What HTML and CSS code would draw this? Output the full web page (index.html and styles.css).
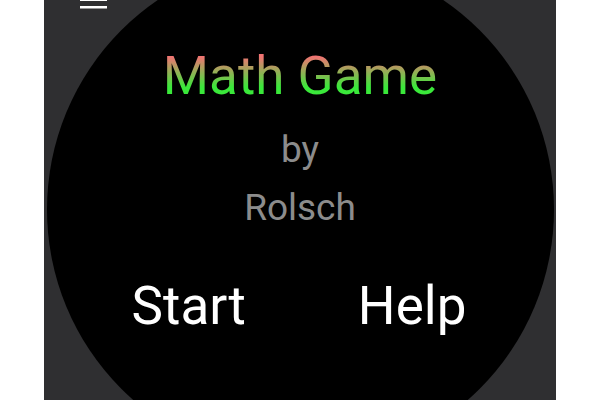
FILE: index.html
```html
<!DOCTYPE html>
<html lang="en">
<head>
    <meta charset="UTF-8">
    <meta name="viewport" content="width=device-width, initial-scale=1.0">
    <title>Math Game</title>
    <link rel="stylesheet" href="styles.css">
</head>
<body>
    <div class="watch">
        <!-- menu button, mostly off the top edge -->
        <svg class="menu-icon" width="27" height="20" viewBox="0 0 27 20">
            <rect x="0" y="1" width="27" height="2.5" fill="#fff"/>
            <rect x="0" y="8.5" width="27" height="2.5" fill="#fff"/>
            <rect x="0" y="16" width="27" height="2.5" fill="#fff"/>
        </svg>

        <div class="face">
            <h1 class="title">Math Game</h1>
            <p class="credit by">by</p>
            <p class="credit author">Rolsch</p>
            <div class="actions">
                <a href="#" class="action">Start</a>
                <a href="#" class="action">Help</a>
            </div>
        </div>
    </div>
</body>
</html>
```

FILE: styles.css
```css
html, body {
    margin: 0;
    padding: 0;
    height: 100%;
    overflow: hidden;
}

body {
    font-family: Roboto, "Liberation Sans", Arial, sans-serif;
    background: #ffffff;
}

.watch {
    position: relative;
    width: 512px;
    height: 400px;
    margin: 0 auto;
    background: #2f2f31;
    overflow: hidden;
}

.menu-icon {
    position: absolute;
    top: -10px;
    left: 36px;
    z-index: 2;
}

.face {
    width: 507px;
    height: 507px;
    margin: -44px auto 0;
    border-radius: 50%;
    background: #000;
    box-sizing: border-box;
    padding-top: 94px;
    display: flex;
    flex-direction: column;
    align-items: center;
}

/* red on top fading into green at the baseline */
.title {
    margin: 0;
    font-size: 53px;
    line-height: 53px;
    font-weight: 400;
    background: linear-gradient(to bottom, #f27373 0%, #f27373 12%, #3ae83a 70%, #3ae83a 100%);
    -webkit-background-clip: text;
    background-clip: text;
    color: transparent;
}

.credit {
    margin: 0;
    font-size: 37px;
    line-height: 37px;
    color: #8c8c8c;
}

.by {
    margin-top: 28px;
}

.author {
    margin-top: 21px;
}

.actions {
    display: flex;
    justify-content: center;
    gap: 112px;
    margin-top: 54px;
    padding-right: 2px;
}

.action {
    font-size: 53px;
    line-height: 53px;
    color: #fff;
    text-decoration: none;
}
```
